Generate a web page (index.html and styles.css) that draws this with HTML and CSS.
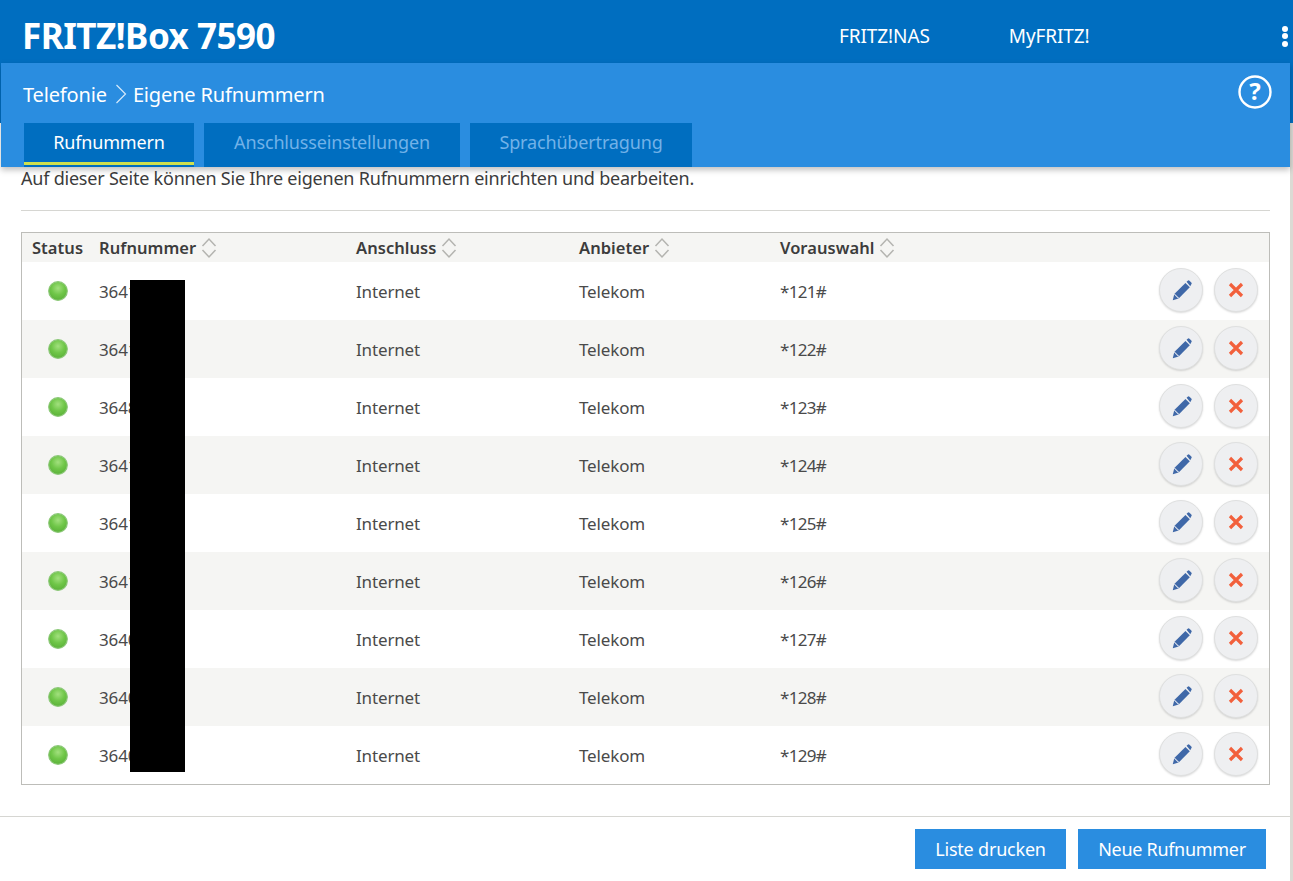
FILE: index.html
```html
<!DOCTYPE html>
<html lang="de">
<head>
<meta charset="utf-8">
<title>FRITZ!Box 7590</title>
<link rel="stylesheet" href="styles.css">
</head>
<body>
<svg class="defs" width="0" height="0" aria-hidden="true">
  <defs>
    <radialGradient id="led" cx="50%" cy="35%" r="60%">
      <stop offset="0" stop-color="#a2e07e"/>
      <stop offset="0.6" stop-color="#6fc648"/>
      <stop offset="1" stop-color="#5fb53c"/>
    </radialGradient>
    <symbol id="sort" viewBox="0 0 16 22">
      <path d="M1.500 9 8 2l6.500 7M1.500 13 8 20l6.500-7" fill="none" stroke="#b4b4b0" stroke-width="1.500"/>
    </symbol>
    <symbol id="pencil" viewBox="0 0 24 24">
      <path d="M2 23l1.800-7L16.500 3.300l5 5L8.800 21z" fill="#3f68a8"/>
      <path d="M17.800 2l1.300-1.200a1.500 1.500 0 0 1 2 0l2.100 2.100a1.500 1.500 0 0 1 0 2L22 7.200z" fill="#3f68a8"/>
      <path d="M3.800 16l5 5" stroke="#e6eaf2" stroke-width="1.200"/>
    </symbol>
    <symbol id="cross" viewBox="0 0 16 16">
      <path d="M2 2l12 12M14 2 2 14" stroke="#f2603c" stroke-width="3.200" fill="none"/>
    </symbol>
    <symbol id="dot" viewBox="0 0 20 20">
      <circle cx="10" cy="10" r="9.300" fill="url(#led)" stroke="#8cc878" stroke-width="1.200"/>
    </symbol>
  </defs>
</svg>
<div class="app">
  <div class="masthead">
    <header class="top">
      <h1 class="brand">FRITZ!Box 7590</h1>
      <nav class="toplinks">
        <a class="toplink">FRITZ!NAS</a>
        <a class="toplink">MyFRITZ!</a>
      </nav>
      <div class="kebab"><i></i><i></i><i></i></div>
    </header>
    <section class="subbar">
      <div class="crumbrow">
        <div class="crumbs">
          <span>Telefonie</span>
          <svg class="chev" width="12" height="20" viewBox="0 0 12 20"><path d="M1.500 1 10.500 10 1.500 19" fill="none" stroke="#d6e9fa" stroke-width="1.200"/></svg>
          <span>Eigene Rufnummern</span>
        </div>
        <svg class="help" width="34" height="34" viewBox="0 0 34 34">
          <circle cx="17" cy="17" r="15.500" fill="none" stroke="#fff" stroke-width="2.400"/>
          <text x="17" y="25" text-anchor="middle" class="helpq">?</text>
        </svg>
      </div>
      <div class="tabs">
        <a class="tab tab-active">Rufnummern</a>
        <a class="tab tab-w2">Anschlusseinstellungen</a>
        <a class="tab tab-w3">Sprachübertragung</a>
      </div>
    </section>
  </div>
  <main class="content">
    <p class="intro">Auf dieser Seite können Sie Ihre eigenen Rufnummern einrichten und bearbeiten.</p>
    <hr class="rule">
    <div class="tablebox">
      <div class="row head">
        <div class="c-status">Status</div>
        <div class="c-num">Rufnummer <svg class="sort"><use href="#sort"/></svg></div>
        <div class="c-con">Anschluss <svg class="sort"><use href="#sort"/></svg></div>
        <div class="c-prov">Anbieter <svg class="sort"><use href="#sort"/></svg></div>
        <div class="c-pre">Vorauswahl <svg class="sort"><use href="#sort"/></svg></div>
      </div>
      <div class="row"><div class="c-status"><svg class="led"><use href="#dot"/></svg></div><div class="c-num">3641</div><div class="c-con">Internet</div><div class="c-prov">Telekom</div><div class="c-pre">*121#</div><div class="c-act"><button class="round"><svg class="ic-p"><use href="#pencil"/></svg></button><button class="round"><svg class="ic-x"><use href="#cross"/></svg></button></div></div>
      <div class="row alt"><div class="c-status"><svg class="led"><use href="#dot"/></svg></div><div class="c-num">3641</div><div class="c-con">Internet</div><div class="c-prov">Telekom</div><div class="c-pre">*122#</div><div class="c-act"><button class="round"><svg class="ic-p"><use href="#pencil"/></svg></button><button class="round"><svg class="ic-x"><use href="#cross"/></svg></button></div></div>
      <div class="row"><div class="c-status"><svg class="led"><use href="#dot"/></svg></div><div class="c-num">3648</div><div class="c-con">Internet</div><div class="c-prov">Telekom</div><div class="c-pre">*123#</div><div class="c-act"><button class="round"><svg class="ic-p"><use href="#pencil"/></svg></button><button class="round"><svg class="ic-x"><use href="#cross"/></svg></button></div></div>
      <div class="row alt"><div class="c-status"><svg class="led"><use href="#dot"/></svg></div><div class="c-num">3641</div><div class="c-con">Internet</div><div class="c-prov">Telekom</div><div class="c-pre">*124#</div><div class="c-act"><button class="round"><svg class="ic-p"><use href="#pencil"/></svg></button><button class="round"><svg class="ic-x"><use href="#cross"/></svg></button></div></div>
      <div class="row"><div class="c-status"><svg class="led"><use href="#dot"/></svg></div><div class="c-num">3641</div><div class="c-con">Internet</div><div class="c-prov">Telekom</div><div class="c-pre">*125#</div><div class="c-act"><button class="round"><svg class="ic-p"><use href="#pencil"/></svg></button><button class="round"><svg class="ic-x"><use href="#cross"/></svg></button></div></div>
      <div class="row alt"><div class="c-status"><svg class="led"><use href="#dot"/></svg></div><div class="c-num">3641</div><div class="c-con">Internet</div><div class="c-prov">Telekom</div><div class="c-pre">*126#</div><div class="c-act"><button class="round"><svg class="ic-p"><use href="#pencil"/></svg></button><button class="round"><svg class="ic-x"><use href="#cross"/></svg></button></div></div>
      <div class="row"><div class="c-status"><svg class="led"><use href="#dot"/></svg></div><div class="c-num">3640</div><div class="c-con">Internet</div><div class="c-prov">Telekom</div><div class="c-pre">*127#</div><div class="c-act"><button class="round"><svg class="ic-p"><use href="#pencil"/></svg></button><button class="round"><svg class="ic-x"><use href="#cross"/></svg></button></div></div>
      <div class="row alt"><div class="c-status"><svg class="led"><use href="#dot"/></svg></div><div class="c-num">3640</div><div class="c-con">Internet</div><div class="c-prov">Telekom</div><div class="c-pre">*128#</div><div class="c-act"><button class="round"><svg class="ic-p"><use href="#pencil"/></svg></button><button class="round"><svg class="ic-x"><use href="#cross"/></svg></button></div></div>
      <div class="row"><div class="c-status"><svg class="led"><use href="#dot"/></svg></div><div class="c-num">3640</div><div class="c-con">Internet</div><div class="c-prov">Telekom</div><div class="c-pre">*129#</div><div class="c-act"><button class="round"><svg class="ic-p"><use href="#pencil"/></svg></button><button class="round"><svg class="ic-x"><use href="#cross"/></svg></button></div></div>
      <div class="redact"></div>
    </div>
  </main>
  <footer class="foot">
    <button class="btn btn-a">Liste drucken</button>
    <button class="btn btn-b">Neue Rufnummer</button>
  </footer>
</div>
</body>
</html>
```

FILE: styles.css
```css
* { box-sizing: border-box; }
html, body { margin: 0; padding: 0; height: 100%; }
body {
  width: 1293px;
  height: 881px;
  overflow: hidden;
  background: #dcdad4;
  font-family: "Noto Sans", "Open Sans", sans-serif;
  color: #3c3c3c;
}
.defs { position: absolute; }
.app { width: 1290px; height: 881px; background: #fff; display: flex; flex-direction: column; }

.masthead {
  flex: none;
  width: 1293px;
  height: 167px;
  background: linear-gradient(#006ec0 123px, transparent 123px);
}
.top {
  height: 63px;
  display: flex;
  align-items: center;
  color: #fff;
  padding: 9px 0 0 22px;
}
.brand {
  margin: 0;
  width: 817px;
  font-size: 35px;
  font-weight: 700;
  letter-spacing: -0.5px;
  line-height: 54px;
  white-space: nowrap;
}
.toplinks { display: flex; gap: 79px; width: 251px; }
.toplink { font-size: 19px; letter-spacing: -0.1px; }
.kebab {
  margin-left: 192px;
  display: flex;
  flex-direction: column;
  gap: 1.500px;
}
.kebab i { display: block; width: 6px; height: 6px; border-radius: 50%; background: #fff; }

.subbar {
  height: 104px;
  width: 1289px;
  margin-left: 1px;
  background: #2a8de0;
  position: relative;
  box-shadow: 0 3px 6px rgba(0, 0, 0, 0.25);
  color: #fff;
  display: flex;
  flex-direction: column;
}
.crumbrow { height: 60px; display: flex; align-items: center; padding: 0 18px 0 22px; justify-content: space-between; }
.crumbs { display: flex; align-items: center; gap: 6px; font-size: 20px; letter-spacing: -0.15px; margin-top: 2px; }
.chev { flex: none; margin-left: 2px; }
.help { flex: none; margin-top: -3px; }
.helpq { font: 700 24px "Noto Sans", sans-serif; fill: #fff; }

.tabs { display: flex; gap: 10px; padding-left: 23px; height: 44px; }
.tab {
  width: 170px;
  background: #006ec0;
  color: #72b2e8;
  font-size: 18px;
  letter-spacing: -0.15px;
  line-height: 38px;
  text-align: center;
  white-space: nowrap;
}
.tab-w2 { width: 256px; }
.tab-w3 { width: 222px; }
.tab-active {
  color: #fff;
  position: relative;
}
.tab-active::after {
  content: "";
  position: absolute;
  left: 0;
  right: 0;
  bottom: 2px;
  height: 3px;
  background: #cfe04e;
}

.content { flex: none; height: 650px; padding: 0 20px 0 21px; border-bottom: 1px solid #d6d6d2; }
.intro { margin: 0; height: 43px; font-size: 18px; letter-spacing: -0.215px; line-height: 22px; }
.rule { margin: 0 0 21px; height: 1px; border: 0; background: #d6d6d2; }
.tablebox { position: relative; height: 553px; border: 1px solid #bdbdb9; }
.row { display: flex; align-items: center; height: 58px; font-size: 17px; letter-spacing: -0.15px; color: #4a4a4a; }
.row.alt { background: #f5f5f3; }
.head {
  height: 29px;
  background: #f5f5f3;
  font-weight: 600;
  color: #3c3c3c;
  letter-spacing: 0.05px;
  font-size: 16.500px;
}
.c-status { width: 77px; padding-left: 10px; flex: none; white-space: nowrap; }
.c-num { width: 257px; flex: none; display: flex; align-items: center; gap: 5px; }
.c-con { width: 223px; flex: none; display: flex; align-items: center; gap: 5px; }
.c-prov { width: 201px; flex: none; display: flex; align-items: center; gap: 5px; }
.c-pre { width: 379px; flex: none; display: flex; align-items: center; gap: 5px; }
.row:not(.head) .c-pre { letter-spacing: -0.7px; }
.c-act { flex: none; display: flex; gap: 11px; margin-top: -2px; }
.led { display: block; width: 20px; height: 20px; margin-left: 16px; }
.sort { width: 16px; height: 22px; flex: none; }
.round {
  width: 44px;
  height: 44px;
  padding: 0;
  border: 1px solid #dfe0e0;
  border-radius: 50%;
  background: #eeeff1;
  box-shadow: 0 1px 2px rgba(0, 0, 0, 0.15);
  display: flex;
  align-items: center;
  justify-content: center;
}
.ic-p { width: 21px; height: 21px; }
.ic-x { width: 16px; height: 16px; }
.redact { position: absolute; left: 108px; top: 47px; width: 55px; height: 492px; background: #000; }

.foot { flex: 1; display: flex; gap: 12px; padding: 12px 24px 0 915px; align-items: flex-start; }
.btn {
  height: 40px;
  border: 0;
  padding: 0;
  background: #2a8de0;
  color: #fff;
  font-family: "Noto Sans", sans-serif;
  font-size: 18px;
  letter-spacing: -0.2px;
}
.btn-a { width: 151px; }
.btn-b { width: 188px; letter-spacing: -0.3px; }
```
